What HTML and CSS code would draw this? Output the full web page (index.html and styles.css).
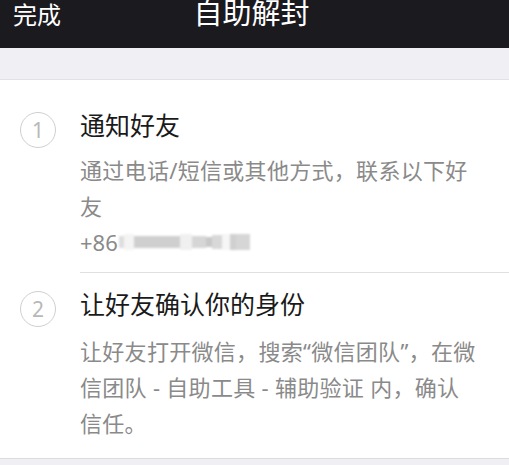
FILE: index.html
```html
<!DOCTYPE html>
<html lang="zh-CN">
<head>
    <meta charset="UTF-8">
    <meta name="viewport" content="width=device-width, initial-scale=1.0">
    <title>自助解封</title>
    <link rel="stylesheet" href="styles.css">
</head>
<body>

    <!-- Top navigation bar -->
    <div class="nav-bar">
        <span class="nav-done">完成</span>
        <span class="nav-title">自助解封</span>
    </div>

    <div class="gap"></div>

    <div class="steps">
        <div class="step">
            <div class="step-num">1</div>
            <div class="step-body first">
                <div class="step-title">通知好友</div>
                <div class="step-desc">通过电话/短信或其他方式，联系以下好友</div>
                <div class="phone">+86<span class="mosaic">
                    <i class="m1"></i><i class="m2"></i><i class="m3"></i><i class="m4"></i><i class="m5"></i><i class="m6"></i><i class="m7"></i><i class="m8"></i><i class="m9"></i><i class="m10"></i>
                </span></div>
            </div>
        </div>
        <div class="step">
            <div class="step-num">2</div>
            <div class="step-body last">
                <div class="step-title">让好友确认你的身份</div>
                <div class="step-desc">让好友打开微信，搜索“微信团队”，在微信团队 - 自助工具 - 辅助验证 内，确认信任。</div>
            </div>
        </div>
    </div>

    <div class="gap bottom"></div>

</body>
</html>
```

FILE: styles.css
```css
/* Base */
body, html {
    margin: 0;
    padding: 0;
    background: #fff;
    font-family: "Noto Sans", "Noto Sans CJK SC", sans-serif;
    overflow: hidden;
}

/* Navigation bar */
.nav-bar {
    height: 48px;
    background: #1b1a1f;
    color: #fff;
    position: relative;
    display: flex;
    justify-content: center;
    align-items: flex-start;
    overflow: hidden;
}
.nav-done {
    position: absolute;
    left: 13px;
    top: -1px;
    font-size: 24px;
    line-height: 32px;
}
.nav-title {
    font-size: 29px;
    line-height: 32px;
    margin-top: -3px;
    margin-left: -6px;
}

/* Gray spacer bands */
.gap {
    height: 31px;
    background: #efeff4;
    border-bottom: 1px solid #e2e2e6;
}
.gap.bottom {
    border-bottom: none;
    border-top: 1px solid #dcdce0;
    height: 20px;
}

/* Steps */
.steps {
    padding-top: 27px;
}
.step {
    display: flex;
    padding-left: 20px;
}
.step-num {
    width: 34px;
    height: 34px;
    flex: none;
    border: 1.5px solid #cfcfcf;
    border-radius: 50%;
    color: #b8b8b8;
    font-size: 21px;
    line-height: 34px;
    text-align: center;
    margin-top: 5px;
    margin-right: 24px;
}
.step-body {
    flex: 1;
    padding-right: 31px;
}
.step-body.first {
    border-bottom: 1px solid #e0e0e0;
    padding-bottom: 12px;
    margin-bottom: 13px;
}
.step-body.last {
    padding-bottom: 17px;
}
.step-title {
    font-size: 25px;
    line-height: 36px;
    color: #1a1a1a;
}
.step-desc {
    margin-top: 9px;
    font-size: 22px;
    line-height: 36px;
    letter-spacing: 0.3px;
    color: #8a8a8a;
}
.step-body.last .step-desc {
    margin-top: 11px;
}

/* Blurred phone number */
.phone {
    font-size: 22px;
    line-height: 36px;
    color: #8a8a8a;
    display: flex;
    align-items: center;
}
.mosaic {
    display: inline-flex;
    align-items: center;
    height: 20px;
    margin-left: 1px;
    filter: blur(1px);
}
.mosaic i {
    display: block;
    height: 16px;
    background: #d4d4d4;
}
.mosaic .m1 { width: 5px; background: #dedede; height: 12px; }
.mosaic .m2 { width: 10px; background: #f4f4f4; }
.mosaic .m3 { width: 46px; background: #cfcfcf; height: 12px; }
.mosaic .m4 { width: 12px; background: #f0f0f0; }
.mosaic .m5 { width: 14px; background: #d6d6d6; height: 12px; }
.mosaic .m6 { width: 6px; background: #c8c8c8; height: 10px; }
.mosaic .m7 { width: 10px; background: #d8d8d8; height: 14px; }
.mosaic .m8 { width: 8px; background: #f6f6f6; }
.mosaic .m9 { width: 6px; background: #d0d0d0; }
.mosaic .m10 { width: 14px; background: #d6d6d6; }
```
